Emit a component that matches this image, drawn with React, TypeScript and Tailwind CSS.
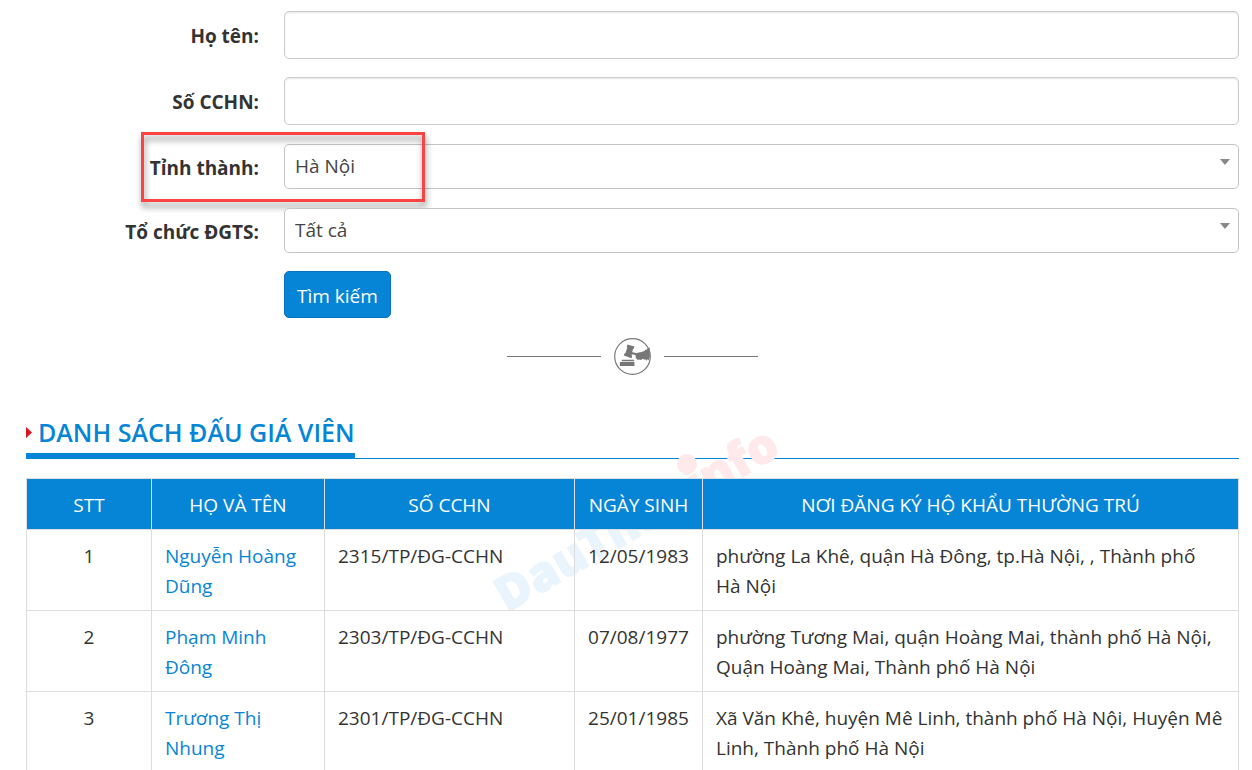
import type { ReactNode } from "react";

const auctioneers = [
  {
    id: 1,
    name: "Nguyễn Hoàng Dũng",
    license: "2315/TP/ĐG-CCHN",
    birthday: "12/05/1983",
    address: "phường La Khê, quận Hà Đông, tp.Hà Nội, , Thành phố Hà\u00a0Nội",
  },
  {
    id: 2,
    name: "Phạm Minh Đông",
    license: "2303/TP/ĐG-CCHN",
    birthday: "07/08/1977",
    address:
      "phường Tương Mai, quận Hoàng Mai, thành phố Hà Nội, Quận Hoàng Mai, Thành phố Hà Nội",
  },
  {
    id: 3,
    name: "Trương Thị Nhung",
    license: "2301/TP/ĐG-CCHN",
    birthday: "25/01/1985",
    address:
      "Xã Văn Khê, huyện Mê Linh, thành phố Hà Nội, Huyện Mê Linh, Thành phố Hà Nội",
  },
];

function Field({
  id,
  label,
  highlight,
  children,
}: {
  id: string;
  label: string;
  highlight?: boolean;
  children: ReactNode;
}) {
  return (
    <div className="relative grid grid-cols-[233px_1fr] gap-[25px]">
      <label htmlFor={id} className="pt-[10px] text-right font-bold">
        {label}
      </label>
      {children}
      {highlight && (
        <div className="pointer-events-none absolute -top-[11px] left-[115px] h-[70px] w-[284px] border-3 border-[#fb4343] drop-shadow-[1px_5px_3px_rgba(0,0,0,0.45)]" />
      )}
    </div>
  );
}

function TextBox({ id }: { id: string }) {
  return (
    <input
      id={id}
      type="text"
      className="h-12 w-full rounded-[5px] border border-[#ccc] bg-white px-3 shadow-[inset_0_1px_2px_rgba(0,0,0,0.1)]"
    />
  );
}

function SelectBox({ id, option }: { id: string; option: string }) {
  return (
    <div className="relative pt-px">
      <select
        id={id}
        className="block h-[45px] w-full appearance-none rounded-[5px] border border-[#c4c4c4] bg-white px-[10px] pb-[2px] text-[#444]"
      >
        <option>{option}</option>
      </select>
      <svg
        className="pointer-events-none absolute top-4 right-[9px] h-[6px] w-[10px] fill-[#888]"
        viewBox="0 0 10 6"
      >
        <path d="M0 0h10L5 6z" />
      </svg>
    </div>
  );
}

function GavelIcon() {
  return (
    <svg width="37" height="37" viewBox="0 0 38 38" fill="#777">
      <circle cx="19" cy="19" r="18.3" fill="none" stroke="#777" strokeWidth="1.2" />
      {/* sound block */}
      <path d="M8 22.300h12.700v1.600H8zM6 24.600h15v4.200H6z" />
      {/* gavel head */}
      <path d="M13.900 6.800l7 2-.6 2.200-.8.200-1.500 6.400.7.700-.7 2.400-7.900-2.600.6-2.300 1-.2 2-5.800-.6-.9z" />
      <path d="M18 14.300l7 1.700-.6 2.200-7-1.800z" />
      {/* hand and cuff */}
      <path d="M24 15.200l4.200-.8 3.400-1.200.5-1.300 1.300.5 1-1.900 2.200-.8.3 9.300-1.400 4.100-1.200-1.300-1 1.600-1-1.600-1 .6-1.700-1.200-1.700 1.300-1.900-.5-1.700.5-.9-1.300-1.300-.4.500-1.400-.8-1 1-1.200z" />
    </svg>
  );
}

function Watermark() {
  return (
    <svg
      className="pointer-events-none absolute -top-[54px] left-1/2 -z-10 h-[200px] w-[300px] -translate-x-1/2 overflow-visible font-extrabold"
      viewBox="0 0 300 200"
      strokeWidth="1"
      aria-hidden="true"
    >
      <text
        x="24"
        y="189"
        fontSize="48"
        fill="#eaf4fc"
        stroke="#eaf4fc"
        transform="rotate(-30 24 189)"
      >
        DauThau
        <tspan fill="#ffe9eb" stroke="#ffe9eb">
          info
        </tspan>
      </text>
      <circle cx="204" cy="40" r="10" fill="#ffe9eb" />
    </svg>
  );
}

export default function App() {
  return (
    <main className="pt-[11px] pr-[13px] pl-[26px] font-['Open_Sans','Noto_Sans',sans-serif] text-[19px] leading-[30px] text-[#333]">
      {/* Search form */}
      <form className="flex flex-col gap-[18px]">
        <Field id="name" label="Họ tên:">
          <TextBox id="name" />
        </Field>
        <Field id="license" label="Số CCHN:">
          <TextBox id="license" />
        </Field>
        <Field id="province" label="Tỉnh thành:" highlight>
          <SelectBox id="province" option="Hà Nội" />
        </Field>
        <Field id="organization" label="Tổ chức ĐGTS:">
          <SelectBox id="organization" option="Tất cả" />
        </Field>
        <button
          type="button"
          className="ml-[258px] h-[47px] self-start rounded-[5px] border border-[#0674be] bg-[#0685d6] px-3 pt-[2px] text-white"
        >
          Tìm kiếm
        </button>
      </form>

      {/* Divider */}
      <div className="mt-5 flex items-center justify-center gap-[13px]">
        <span className="h-px w-[94px] bg-[#777]" />
        <GavelIcon />
        <span className="h-px w-[94px] bg-[#777]" />
      </div>

      {/* Auctioneer list */}
      <section className="mt-[34px]">
        <div className="flex border-b border-[#0685d6]">
          <h2 className="-mb-px flex items-center gap-[6px] border-b-6 border-[#0685d6] pt-[5px] pb-[3px] text-[25px] leading-9 font-semibold text-[#0685d6]">
            <svg className="h-[11px] w-[6px] fill-[#e0141e]" viewBox="0 0 6 11">
              <path d="M0 0l6 5.500L0 11z" />
            </svg>
            DANH SÁCH ĐẤU GIÁ VIÊN
          </h2>
        </div>

        <div className="relative isolate mt-[19px]">
          <Watermark />
          <table className="w-full table-fixed border-collapse">
            <thead>
              <tr className="h-[51px] bg-[#0685d6] text-white *:border *:border-[#ddd] *:pt-[2px] *:font-normal">
                <th className="w-[125px]">STT</th>
                <th className="w-[173px]">HỌ VÀ TÊN</th>
                <th className="w-[250px]">SỐ CCHN</th>
                <th className="w-[128px]">NGÀY SINH</th>
                <th>NƠI ĐĂNG KÝ HỘ KHẨU THƯỜNG TRÚ</th>
              </tr>
            </thead>
            <tbody>
              {auctioneers.map((person) => (
                <tr
                  key={person.id}
                  className="align-top *:border *:border-[#ddd] *:px-[13px] *:pt-[11px] *:pb-[9px]"
                >
                  <td className="text-center">{person.id}</td>
                  <td>
                    <a href="#" className="text-[#0685d6]">
                      {person.name}
                    </a>
                  </td>
                  <td>{person.license}</td>
                  <td className="text-center">{person.birthday}</td>
                  <td>{person.address}</td>
                </tr>
              ))}
            </tbody>
          </table>
        </div>
      </section>
    </main>
  );
}
